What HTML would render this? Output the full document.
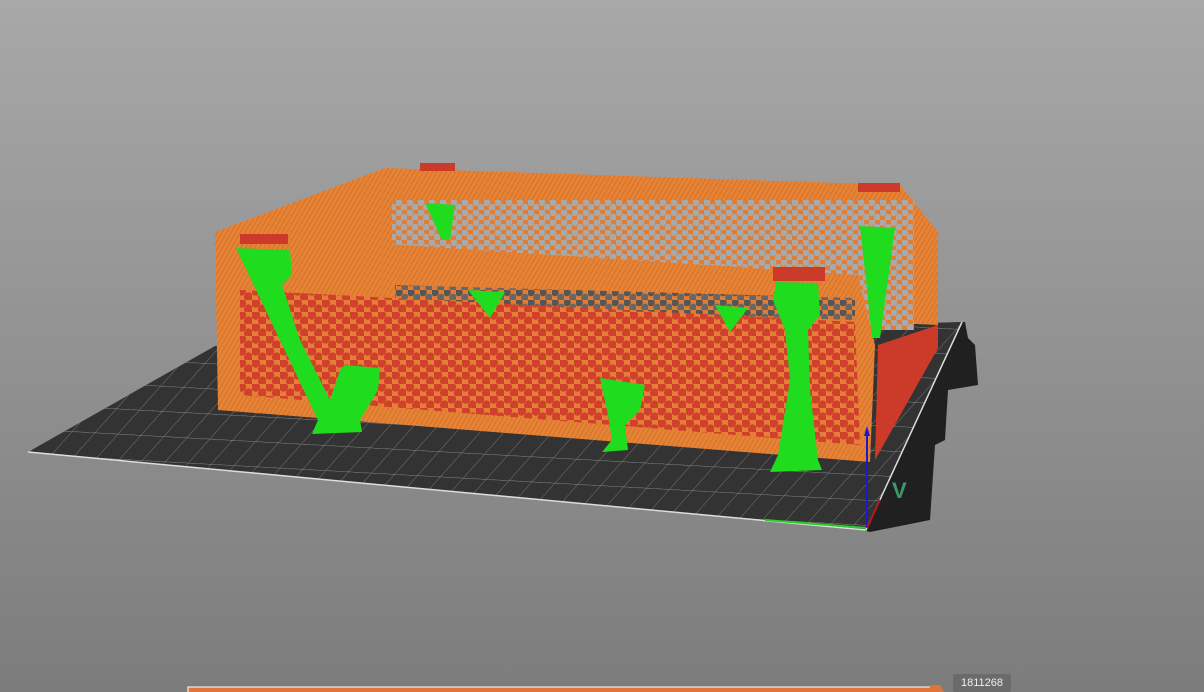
<!DOCTYPE html>
<html><head><meta charset="utf-8"><style>
html,body{margin:0;padding:0;width:1204px;height:692px;overflow:hidden;background:linear-gradient(#a8a8a8,#7c7c7c);font-family:"Liberation Sans",sans-serif}
svg{position:absolute;left:0;top:0}
.lbl{position:absolute;left:953px;top:674px;width:58px;height:18px;background:#6b6b6b;color:#eee;font-size:11px;line-height:18px;text-align:center;border-radius:2px}
</style></head><body>
<svg width="1204" height="692" viewBox="0 0 1204 692">
<defs>
<pattern id="grid" width="24" height="24" patternUnits="userSpaceOnUse" patternTransform="skewX(-40) rotate(3)">
<rect width="24" height="24" fill="#333"/><path d="M0 0H24M0 0V24" stroke="#888" stroke-width="1"/>
</pattern>
<pattern id="hexr" width="14" height="12" patternUnits="userSpaceOnUse">
<rect width="14" height="12" fill="#e57e36"/><circle cx="3.5" cy="3" r="4.6" fill="#d0402c"/><circle cx="10.5" cy="9" r="4.6" fill="#d0402c"/>
</pattern>
<pattern id="hexg" width="11" height="10" patternUnits="userSpaceOnUse">
<rect width="11" height="10" fill="#e07c34"/><circle cx="2.75" cy="2.5" r="3.6" fill="#a9a9a9"/><circle cx="8.25" cy="7.5" r="3.6" fill="#a9a9a9"/>
</pattern>
<pattern id="hexd" width="12" height="10" patternUnits="userSpaceOnUse">
<rect width="12" height="10" fill="#e07c34"/><circle cx="3" cy="2.5" r="3.8" fill="#555"/><circle cx="9" cy="7.5" r="3.8" fill="#666"/>
</pattern>
<pattern id="stripe" width="4" height="4" patternUnits="userSpaceOnUse" patternTransform="rotate(30)">
<rect width="4" height="4" fill="#e68436"/><rect width="1" height="4" fill="#d8702c"/>
</pattern>
</defs>
<!-- bed shadow -->
<polygon points="215,346 965,322 968,338 975,345 978,385 948,390 945,440 935,445 930,520 870,532" fill="#202020"/>
<!-- bed -->
<polygon points="28,452 215,346 962,322 866,530" fill="url(#grid)"/>
<polyline points="28,452 866,530 962,322" fill="none" stroke="#ddd" stroke-width="1.5"/>
<!-- back wall -->
<polygon points="385,168 900,185 938,232 938,325 385,300" fill="url(#stripe)"/>
<rect x="392" y="200" width="522" height="130" fill="url(#hexg)"/>
<!-- left inner wall -->
<polygon points="215,232 385,168 390,245 293,238" fill="url(#stripe)"/>
<!-- right red floor -->
<polygon points="878,345 938,325 938,348 875,460" fill="#cc3a2a"/>
<!-- front wall -->
<polygon points="215,232 293,238 858,275 875,345 870,462 218,410" fill="url(#stripe)"/>
<polygon points="395,285 855,298 855,320 395,305" fill="url(#hexd)"/>
<polygon points="240,290 855,322 860,445 240,395" fill="url(#hexr)"/>
<!-- red caps -->
<rect x="240" y="234" width="48" height="10" fill="#cc3a2a"/>
<rect x="420" y="163" width="35" height="8" fill="#cc3a2a"/>
<rect x="858" y="183" width="42" height="9" fill="#cc3a2a"/>
<rect x="773" y="267" width="52" height="14" fill="#cc3a2a"/>
<!-- supports -->
<g fill="#1fdc1f">
<path d="M236 248 L290 250 L292 275 L282 285 L300 340 L330 400 L340 370 L345 365 L380 368 L378 390 L360 420 L362 432 L312 434 L318 420 Z"/>
<path d="M776 282 L818 283 L820 315 L808 330 L810 390 L818 460 L822 470 L770 472 L778 455 L790 380 L785 330 L773 300 Z"/>
<path d="M600 378 L645 385 L640 410 L625 425 L628 450 L602 452 L612 440 L608 415 Z"/>
<path d="M425 203 L455 205 L450 240 L442 240 Z"/>
<path d="M468 290 L505 292 L490 318 Z"/>
<path d="M715 305 L748 308 L730 332 Z"/>
<path d="M860 226 L895 228 L880 338 L872 338 L866 280 Z"/>
</g>
<!-- axes -->
<line x1="867" y1="528" x2="867" y2="432" stroke="#1a1acc" stroke-width="2"/>
<polygon points="867,426 864,436 870,436" fill="#1a1acc"/>
<line x1="765" y1="520" x2="866" y2="528" stroke="#2ad02a" stroke-width="2"/>
<line x1="867" y1="528" x2="880" y2="500" stroke="#b01a1a" stroke-width="2"/>
<text x="892" y="498" fill="#3a9a6a" font-size="22" font-family="Liberation Sans" font-weight="bold">V</text>
<!-- slider -->
<rect x="188" y="687" width="747" height="6" fill="#e0743a" stroke="#fff" stroke-width="1"/>
<polygon points="927,692 931,685 940,685 944,692" fill="#e0743a"/>
</svg>
<div class="lbl">1811268</div>
</body></html>
